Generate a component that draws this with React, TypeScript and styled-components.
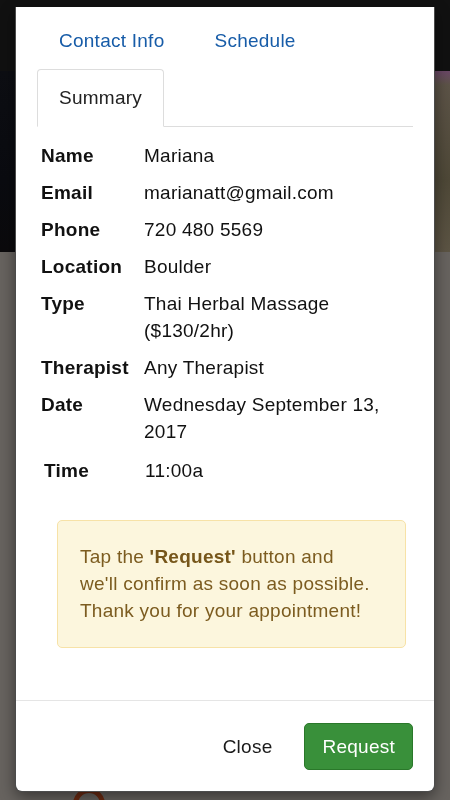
import React from "react";
import styled, { createGlobalStyle } from "styled-components";

const Global = createGlobalStyle`
  html, body { margin: 0; padding: 0; }
  body {
    background: #67635f;
    font-family: "Liberation Sans", Arial, Helvetica, sans-serif;
    -webkit-font-smoothing: antialiased;
  }
  * { box-sizing: border-box; }
`;

const Page = styled.div`
  width: 450px;
  height: 800px;
  overflow: hidden;
  display: flex;
  flex-direction: column;
  background: #67635f;
`;

const TopBar = styled.div`
  flex: 0 0 71px;
  background: #111111;
`;

const Hero = styled.div`
  flex: 0 0 181px;
  display: flex;
`;

const HeroLeft = styled.div`
  flex: 1;
  background: linear-gradient(to bottom, #0d0e13 0%, #0a0b10 60%, #0b0a0c 100%);
`;

const HeroRight = styled.div`
  flex: 1;
  background: linear-gradient(
    to bottom,
    #6a4766 0px,
    #5c5347 14px,
    #4e4837 60%,
    #5c5444 100%
  );
`;

const Content = styled.div`
  flex: 0 0 auto;
  padding: 536px 0 0 73px;
`;

const Ring = styled.div`
  width: 32px;
  height: 32px;
  border-radius: 50%;
  border: 5px solid #6b2a12;
`;

const Modal = styled.div`
  position: fixed;
  top: 7px;
  left: 15px;
  width: 420px;
  background: #ffffff;
  border: 1px solid rgba(0, 0, 0, 0.7);
  border-top: none;
  border-radius: 0 0 7px 7px;
  box-shadow: 0 5px 15px rgba(0, 0, 0, 0.45);
  display: flex;
  flex-direction: column;
`;

const Body = styled.div`
  padding: 5px 21px 52px 21px;
`;

const Tabs = styled.ul`
  list-style: none;
  margin: 0;
  padding: 0;
  display: flex;
  flex-wrap: wrap;
  column-gap: 6px;
  border-bottom: 1px solid #dddddd;
`;

const Tab = styled.li<{ $active?: boolean }>`
  margin-bottom: -1px;
  padding: 15px 21px;
  line-height: 26px;
  font-size: 19px;
  letter-spacing: 0.25px;
  border: 1px solid ${(p) => (p.$active ? "#dddddd" : "transparent")};
  border-bottom-color: ${(p) => (p.$active ? "#ffffff" : "transparent")};
  border-radius: 4px 4px 0 0;
  color: ${(p) => (p.$active ? "#222222" : "#175ca8")};
  background: ${(p) => (p.$active ? "#ffffff" : "transparent")};
`;

const Table = styled.div`
  margin-top: 10px;
  display: flex;
  flex-direction: column;
`;

const Row = styled.div<{ $shift?: boolean }>`
  display: grid;
  grid-template-columns: ${(p) => (p.$shift ? "101px" : "103px")} 1fr;
  padding: ${(p) => (p.$shift ? "7px 4px 5px 7px" : "5px 4px 5px 4px")};
  font-size: 19px;
  letter-spacing: 0.25px;
  line-height: 27px;
  color: #111111;
`;

const Label = styled.div`
  font-weight: 700;
`;

const Value = styled.div``;

const Alert = styled.div`
  margin: 31px 7px 0 20px;
  padding: 22px 22px 23px;
  border: 1px solid #f7e2a7;
  border-radius: 5px;
  background: #fcf6dd;
  color: #7c5c20;
  font-size: 19px;
  letter-spacing: 0.25px;
  line-height: 27px;
  white-space: nowrap;
`;

const Strong = styled.b`
  font-weight: 700;
  color: #76561a;
`;

const Footer = styled.div`
  border-top: 1px solid #e5e5e5;
  padding: 22px 21px 21px;
  display: flex;
  justify-content: flex-end;
  gap: 14px;
`;

const Button = styled.button<{ $primary?: boolean }>`
  font-family: "Liberation Sans", Arial, Helvetica, sans-serif;
  font-size: 19px;
  letter-spacing: 0.25px;
  line-height: 27px;
  padding: 9px 17px;
  border-radius: 5px;
  border: 1px solid ${(p) => (p.$primary ? "#2a782a" : "transparent")};
  background: ${(p) => (p.$primary ? "#39903a" : "transparent")};
  color: ${(p) => (p.$primary ? "#ffffff" : "#1a1a1a")};
  cursor: pointer;
`;

const rows: [string, string][] = [
  ["Name", "Mariana"],
  ["Email", "marianatt@gmail.com"],
  ["Phone", "720 480 5569"],
  ["Location", "Boulder"],
  ["Type", "Thai Herbal Massage ($130/2hr)"],
  ["Therapist", "Any Therapist"],
  ["Date", "Wednesday September 13, 2017"],
];

export default function App() {
  return (
    <>
      <Global />
      <Page>
        <TopBar />
        <Hero>
          <HeroLeft />
          <HeroRight />
        </Hero>
        <Content>
          <Ring />
        </Content>
      </Page>
      <Modal>
        <Body>
          <Tabs>
            <Tab>Contact Info</Tab>
            <Tab>Schedule</Tab>
            <Tab $active>Summary</Tab>
          </Tabs>
          <Table>
            {rows.map(([k, v]) => (
              <Row key={k}>
                <Label>{k}</Label>
                <Value>{v}</Value>
              </Row>
            ))}
            <Row $shift>
              <Label>Time</Label>
              <Value>11:00a</Value>
            </Row>
          </Table>
          <Alert>
            Tap the <Strong>'Request'</Strong> button and
            <br />
            we'll confirm as soon as possible.
            <br />
            Thank you for your appointment!
          </Alert>
        </Body>
        <Footer>
          <Button>Close</Button>
          <Button $primary>Request</Button>
        </Footer>
      </Modal>
    </>
  );
}
